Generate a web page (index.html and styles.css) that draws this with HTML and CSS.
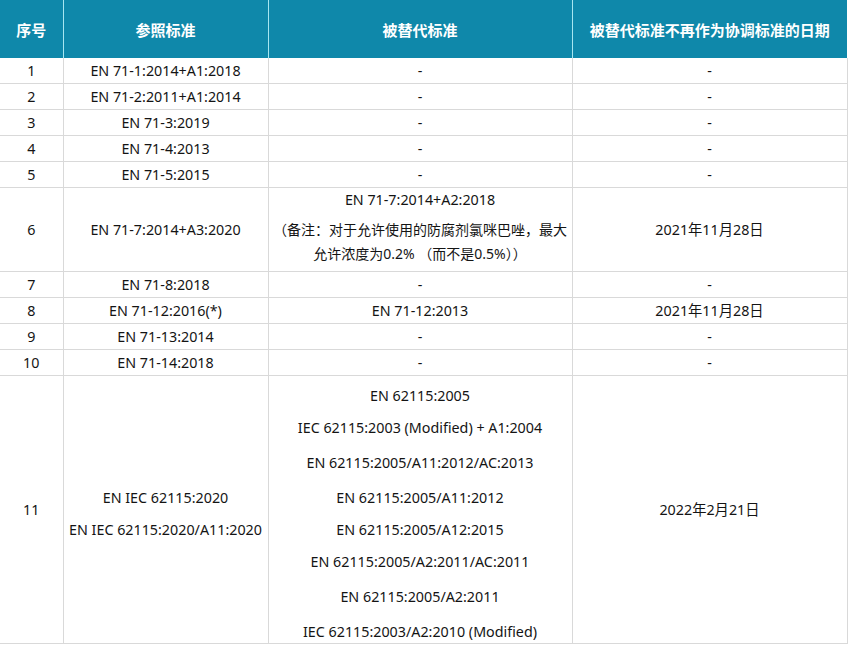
FILE: index.html
```html
<!DOCTYPE html>
<html lang="zh-CN">
<head>
<meta charset="utf-8">
<title>标准表</title>
<link rel="stylesheet" href="styles.css">
</head>
<body>
<table class="std-table">
  <colgroup>
    <col class="c-no">
    <col class="c-ref">
    <col class="c-rep">
    <col class="c-date">
  </colgroup>
  <thead>
    <tr>
      <th>序号</th>
      <th>参照标准</th>
      <th>被替代标准</th>
      <th>被替代标准不再作为协调标准的日期</th>
    </tr>
  </thead>
  <tbody>
    <tr><td>1</td><td>EN 71-1:2014+A1:2018</td><td>-</td><td>-</td></tr>
    <tr><td>2</td><td>EN 71-2:2011+A1:2014</td><td>-</td><td>-</td></tr>
    <tr><td>3</td><td>EN 71-3:2019</td><td>-</td><td>-</td></tr>
    <tr><td>4</td><td>EN 71-4:2013</td><td>-</td><td>-</td></tr>
    <tr><td>5</td><td>EN 71-5:2015</td><td>-</td><td>-</td></tr>
    <tr>
      <td>6</td>
      <td>EN 71-7:2014+A3:2020</td>
      <td class="note-cell">
        <div class="note-title">EN 71-7:2014+A2:2018</div>
        <div class="note">（备注：对于允许使用的防腐剂氯咪巴唑，最大<br>允许浓度为0.2% （而不是0.5%））</div>
      </td>
      <td>2021年11月28日</td>
    </tr>
    <tr><td>7</td><td>EN 71-8:2018</td><td>-</td><td>-</td></tr>
    <tr><td>8</td><td>EN 71-12:2016(*)</td><td>EN 71-12:2013</td><td>2021年11月28日</td></tr>
    <tr><td>9</td><td>EN 71-13:2014</td><td>-</td><td>-</td></tr>
    <tr><td>10</td><td>EN 71-14:2018</td><td>-</td><td>-</td></tr>
    <tr>
      <td>11</td>
      <td class="ref-cell">
        <div class="ref-line">EN IEC 62115:2020</div>
        <div class="ref-line">EN IEC 62115:2020/A11:2020</div>
      </td>
      <td class="list-cell">
        <div class="rep-line">EN 62115:2005</div>
        <div class="rep-line gap-s">IEC 62115:2003 (Modified) + A1:2004</div>
        <div class="rep-line gap-l">EN 62115:2005/A11:2012/AC:2013</div>
        <div class="rep-line gap-l">EN 62115:2005/A11:2012</div>
        <div class="rep-line gap-s">EN 62115:2005/A12:2015</div>
        <div class="rep-line gap-s">EN 62115:2005/A2:2011/AC:2011</div>
        <div class="rep-line gap-l">EN 62115:2005/A2:2011</div>
        <div class="rep-line gap-l">IEC 62115:2003/A2:2010 (Modified)</div>
      </td>
      <td>2022年2月21日</td>
    </tr>
  </tbody>
</table>
</body>
</html>
```

FILE: styles.css
```css
html, body {
  margin: 0;
  padding: 0;
  background: #ffffff;
}

.std-table {
  border-collapse: collapse;
  table-layout: fixed;
  width: 847px;
  font-family: "Noto Sans", "Noto Sans CJK SC", sans-serif;
  font-size: 14.3px;
  color: #141414;
}

.c-no { width: 63px; }
.c-ref { width: 205px; }
.c-rep { width: 304px; }
.c-date { width: 275px; }

.std-table th {
  background: #0f88aa;
  color: #ffffff;
  font-family: "Noto Sans CJK SC", sans-serif;
  font-weight: bold;
  font-size: 15px;
  height: 58px;
  padding: 0;
  text-align: center;
  vertical-align: middle;
  border-left: 1px solid #a8e6f0;
  border-right: 1px solid #a8e6f0;
}

.std-table th:first-child { border-left: none; }
.std-table th:last-child { border-right: none; }

.std-table td {
  border: 1px solid #d9d9d9;
  height: 25px;
  line-height: 25px;
  padding: 0 2px;
  text-align: center;
  vertical-align: middle;
  white-space: nowrap;
}

.std-table tr:first-child td { border-top: none; }
.std-table td:first-child { border-left: none; }

.std-table .note-cell {
  padding-top: 0;
  padding-bottom: 5px;
}

.note-title {
  line-height: 24px;
  margin-bottom: 6px;
}

.note {
  line-height: 24px;
  font-size: 14px;
}

.std-table .ref-cell {
  padding-top: 8px;
}

.ref-line {
  line-height: 32px;
}

.std-table .list-cell {
  padding-top: 9px;
  padding-bottom: 0;
}

.rep-line {
  line-height: 22px;
}

.gap-s { margin-top: 10px; }
.gap-l { margin-top: 13px; }
```
